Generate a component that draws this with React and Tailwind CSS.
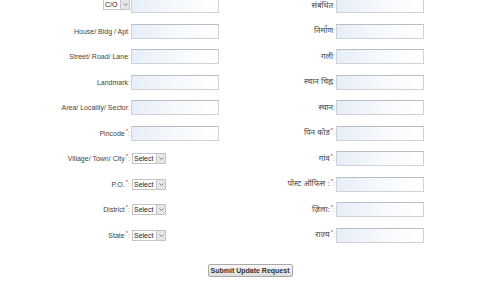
import React from "react";

const rows = [
  { left: null, right: "संबंधित" },
  { left: "House/ Bldg / Apt", right: "निर्माण" },
  { left: "Street/ Road/ Lane", right: "गली" },
  { left: "Landmark", right: "स्थान चिह्न" },
  { left: "Area/ Locality/ Sector", right: "स्थान" },
  { left: "Pincode", req: true, right: "पिन कोड", rreq: true },
  { left: "Village/ Town/ City", req: true, right: "गांव", rreq: true },
  { left: "P.O.", req: true, right: "पोस्ट ऑफिस :", rreq: true },
  { left: "District", req: true, right: "ज़िला:", rreq: true },
  { left: "State", req: true, right: "राज्य", rreq: true },
];

const TextBox = () => (
  <div className="h-[15px] w-[88px] border border-[#cfd3d8] border-t-[#b9bec4] bg-linear-to-r from-[#e6eef8] via-[#f6f9fc] to-white" />
);

const Chevron = () => (
  <div className="flex h-full w-[9px] items-center justify-center border-l border-[#c4c4c4] bg-[#e6e6e6]">
    <svg width="5" height="3" viewBox="0 0 5 3">
      <path d="M0.5 0.5 L2.5 2.5 L4.5 0.5" fill="none" stroke="#777" strokeWidth="0.9" />
    </svg>
  </div>
);

const SelectBox = ({ text, w }) => (
  <div className={`flex h-[11px] items-stretch border border-[#c4c4c4] bg-white ${w}`}>
    <span className="flex flex-1 items-center px-[1px] leading-none text-[#222]">{text}</span>
    <Chevron />
  </div>
);

const Label = ({ text, req, hindi }) => (
  <span className={`pr-[1px] leading-none text-[#444] ${hindi ? "text-[8px]" : ""}`}>
    {text}
    {req && <sup className="ml-[1px] text-[6px] text-[#e32626]">*</sup>}
    <span className="text-[7px] text-[#999]">:</span>
  </span>
);

export default function App() {
  return (
    <div
      className="flex h-[281px] w-[500px] flex-col overflow-hidden bg-white text-[7px]"
      style={{ fontFamily: '"Liberation Sans", Arial, "Noto Sans", sans-serif' }}
    >
      <div className="-mt-[7px] grid grid-cols-[131px_88px_117px_88px]">
        {rows.map((r, i) => (
          <React.Fragment key={i}>
            <div className="flex h-[25.5px] items-center justify-end">
              {r.left === null ? (
                <div className="mr-[1px] mt-[-3px]">
                  <SelectBox text="C/O" w="w-[27px]" />
                </div>
              ) : (
                <Label text={r.left} req={r.req} />
              )}
            </div>
            <div className="flex h-[25.5px] items-center">
              {i >= 6 ? (
                <div className="ml-[1px]">
                  <SelectBox text="Select" w="w-[34px]" />
                </div>
              ) : (
                <TextBox />
              )}
            </div>
            <div className="flex h-[25.5px] items-center justify-end">
              <Label text={r.right} req={r.rreq} hindi />
            </div>
            <div className="flex h-[25.5px] items-center">
              <TextBox />
            </div>
          </React.Fragment>
        ))}
      </div>
      <div className="mt-[16px] flex justify-center">
        <button className="h-[13px] w-[85px] rounded-[2px] border border-[#a9a9a9] bg-linear-to-b from-[#f7f7f7] to-[#dcdcdc] text-[7px] font-bold leading-none text-[#333]">
          Submit Update Request
        </button>
      </div>
    </div>
  );
}
